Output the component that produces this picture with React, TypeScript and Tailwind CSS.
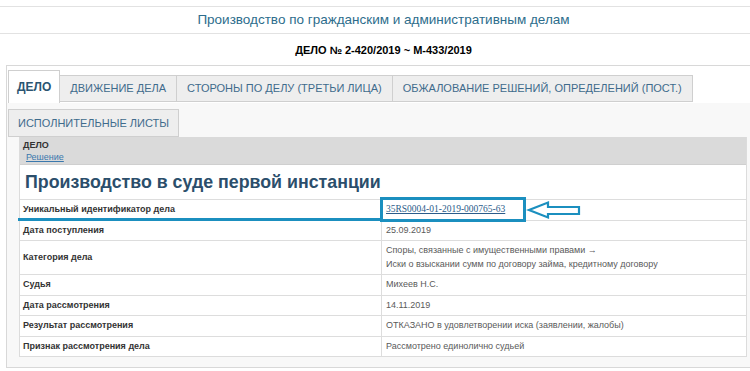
import type { ReactNode } from "react";

const rows: { label: string; value: ReactNode }[] = [
    {
        label: "Уникальный идентификатор дела",
        value: (
            <a href="#" className="font-['Liberation_Serif',serif] text-[9.5px] text-[#2b5c8a] underline">
                35RS0004-01-2019-000765-63
            </a>
        ),
    },
    { label: "Дата поступления", value: "25.09.2019" },
    {
        label: "Категория дела",
        value: (
            <>
                Споры, связанные с имущественными правами →
                <br />
                Иски о взыскании сумм по договору займа, кредитному договору
            </>
        ),
    },
    { label: "Судья", value: "Михеев Н.С." },
    { label: "Дата рассмотрения", value: "14.11.2019" },
    { label: "Результат рассмотрения", value: "ОТКАЗАНО в удовлетворении иска (заявлении, жалобы)" },
    { label: "Признак рассмотрения дела", value: "Рассмотрено единолично судьей" },
];

const tabs = ["ДВИЖЕНИЕ ДЕЛА", "СТОРОНЫ ПО ДЕЛУ (ТРЕТЬИ ЛИЦА)", "ОБЖАЛОВАНИЕ РЕШЕНИЙ, ОПРЕДЕЛЕНИЙ (ПОСТ.)"];

export default function App() {
    return (
        <div className="relative h-[371px] w-[750px] overflow-hidden bg-white font-['Liberation_Sans',Arial,sans-serif]">
            <div className="pt-[6px]">
                <div className="flex h-[28px] items-center justify-center border-y border-[#e2e2e2] pl-[17px] text-[13.5px] text-[#2d6d8c]">
                    Производство по гражданским и административным делам
                </div>
                <div className="flex h-[31px] items-center justify-center pl-[17px] pt-[2px] text-[11px] font-bold text-black">
                    ДЕЛО № 2-420/2019 ~ М-433/2019
                </div>
            </div>

            <div className="ml-[6px] w-[750px] border-y border-l border-[#d8d8d8] bg-white">
                <div className="flex items-end pl-[1px] pt-[4px]">
                    <div className="flex h-[33px] items-center border-x border-t border-[#cfcfcf] bg-white px-[8px] text-[12px] font-bold text-[#2b5572]">
                        ДЕЛО
                    </div>
                    {tabs.map((t) => (
                        <div
                            key={t}
                            className="mb-px flex h-[27px] items-center whitespace-nowrap border border-l-0 border-[#cfcfcf] bg-[#eeeeee] px-[10px] text-[11px] text-[#3f6b8c]"
                        >
                            {t}
                        </div>
                    ))}
                </div>

                <div className="bg-[#f8f8f8] pb-[10px] pl-[1px] pt-[6px]">
                    <div className="flex h-[28px] w-fit items-center whitespace-nowrap border border-[#cfcfcf] bg-[#eeeeee] px-[9px] text-[11px] text-[#3f6b8c]">
                        ИСПОЛНИТЕЛЬНЫЕ ЛИСТЫ
                    </div>

                    <div className="ml-[11px] w-[728px] border border-t-0 border-[#dcdcdc] bg-white">
                        <div className="h-[28px] border-b border-[#cfcfcf] bg-[#dadada] px-[3px] pt-[2px] text-[9px] leading-[12px]">
                            <div className="font-bold text-[#333]">ДЕЛО</div>
                            <a href="#" className="ml-[3px] text-[#3b78ad] underline">
                                Решение
                            </a>
                        </div>
                        <div className="flex h-[35px] items-center border-b border-[#dddddd] px-[5px] text-[17.8px] font-bold text-[#2b4e6b]">
                            Производство в суде первой инстанции
                        </div>
                        {rows.map((r) => (
                            <div key={r.label} className="flex border-b border-[#dddddd] text-[9px] leading-[13.5px] last:border-b-0">
                                <div className="flex w-[362px] items-center border-r border-[#dddddd] px-[3px] py-[3px] font-bold text-[#333]">
                                    {r.label}
                                </div>
                                <div className="flex-1 px-[4px] py-[3px] text-[#5a5a5a]">{r.value}</div>
                            </div>
                        ))}
                    </div>
                </div>
            </div>

            {/* annotation: underline, frame and arrow */}
            <div className="absolute left-[18px] top-[218px] h-[3px] w-[365px] bg-[#1b8fbf]" />
            <div className="absolute left-[380px] top-[197px] h-[25px] w-[146px] border-[3px] border-[#1b8fbf]" />
            <svg className="absolute left-[526px] top-[200px]" width="58" height="20" viewBox="0 0 58 20">
                <path d="M3 10 L22 2.5 L22 7 L53 7 L53 14 L22 14 L22 17.5 Z" fill="none" stroke="#1b8fbf" strokeWidth="2.2" strokeLinejoin="miter" />
            </svg>
        </div>
    );
}
